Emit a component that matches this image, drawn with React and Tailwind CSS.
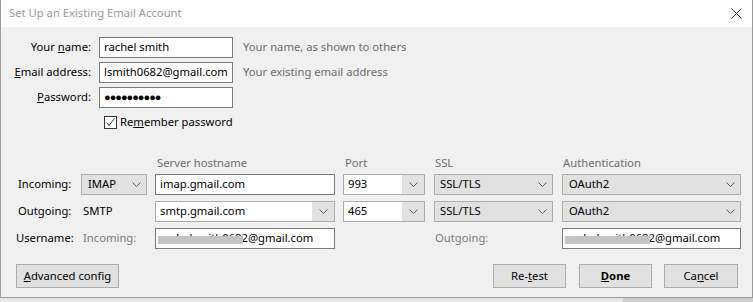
import React from 'react';

const Chevron = () => (
  <svg width="9" height="5" viewBox="0 0 9 5" className="block">
    <path d="M0.5 0.5 L4.5 4.5 L8.5 0.5" fill="none" stroke="#606060" strokeWidth="1" />
  </svg>
);

const Select = ({ value, width, pl = 'pl-[5px]' }) => (
  <div className={`h-[21px] ${width} bg-[#e1e1e1] border border-[#adadad] flex items-center justify-between ${pl} pr-[5px]`}>
    <span>{value}</span>
    <Chevron />
  </div>
);

const Combo = ({ value, width }) => (
  <div className={`h-[21px] ${width} bg-white border border-[#adadad] flex items-stretch`}>
    <span className="flex-1 flex items-center pl-[4px]">{value}</span>
    <span className="w-[22px] bg-[#e1e1e1] flex items-center justify-center">
      <Chevron />
    </span>
  </div>
);

const Input = ({ value, width, children }) => (
  <div className={`relative h-[21px] ${width} bg-white border border-[#7a7a7a] flex items-center pl-[4px] whitespace-nowrap overflow-hidden`}>
    {value}
    {children}
  </div>
);

const Blurred = ({ width }) => (
  <Input value="rachelsmith0682@gmail.com" width={width}>
    <span className="absolute left-[2px] top-[7px] w-[85px] h-[8px] bg-[#c3c3c3]" />
  </Input>
);

const Button = ({ children, width, bold }) => (
  <div className={`h-[24px] ${width} bg-[#e1e1e1] border border-[#adadad] flex items-center justify-center ${bold ? 'font-bold' : ''}`}>
    {children}
  </div>
);

const App = () => {
  return (
    <div className="w-[753px] h-[302px] bg-[#d2d2d2] text-[11.25px] text-black overflow-hidden" style={{ fontFamily: '"Noto Sans", "Open Sans", sans-serif' }}>
      <div className="w-[753px] h-[298px] bg-[#f0f0f0] border-l border-r border-b border-[#9a9a9a] flex flex-col">
        {/* title bar */}
        <div className="h-[27px] bg-white flex items-center justify-between pl-[8px] pr-[10px] shrink-0">
          <span className="text-[#999999]">Set Up an Existing Email Account</span>
          <svg width="11" height="11" viewBox="0 0 11 11">
            <path d="M0.5 0.5 L10.5 10.5 M10.5 0.5 L0.5 10.5" stroke="#404040" strokeWidth="1" fill="none" />
          </svg>
        </div>

        {/* account rows */}
        <div className="flex flex-col gap-[4px] mt-[10px]">
          <div className="flex items-center h-[21px]">
            <span className="w-[90px] text-right">Your <u>n</u>ame:</span>
            <div className="ml-[8px]"><Input value="rachel smith" width="w-[134px]" /></div>
            <span className="ml-[10px] text-[#6d6d6d]">Your name, as shown to others</span>
          </div>
          <div className="flex items-center h-[21px]">
            <span className="w-[90px] text-right"><u>E</u>mail address:</span>
            <div className="ml-[8px]"><Input value="lsmith0682@gmail.com" width="w-[134px]" /></div>
            <span className="ml-[10px] text-[#6d6d6d]">Your existing email address</span>
          </div>
          <div className="flex items-center h-[21px]">
            <span className="w-[90px] text-right"><u>P</u>assword:</span>
            <div className="ml-[8px]">
              <Input value={<span className="tracking-[-1px] text-[11px]">●●●●●●●●●●</span>} width="w-[134px]" />
            </div>
          </div>
        </div>
        <div className="flex items-center h-[16px] mt-[6px] pl-[103px]">
          <span className="w-[13px] h-[13px] bg-white border border-[#333333] flex items-center justify-center">
            <svg width="11" height="11" viewBox="0 0 11 11">
              <path d="M1.5 5.5 L4 8.5 L9.5 1.5" stroke="#333333" strokeWidth="1" fill="none" />
            </svg>
          </span>
          <span className="ml-[3px]">Re<u>m</u>ember password</span>
        </div>

        {/* server settings */}
        <div className="flex h-[16px] mt-[25px] items-center text-[#6d6d6d]">
          <span className="ml-[156px] w-[188px]">Server hostname</span>
          <span className="w-[90px]">Port</span>
          <span className="w-[128px]">SSL</span>
          <span>Authentication</span>
        </div>
        <div className="flex flex-col gap-[6px] mt-[3px]">
          <div className="flex items-center h-[21px] pl-[15px]">
            <span className="w-[65px] pl-[2px]">Incoming:</span>
            <Select value="IMAP" width="w-[66px]" pl="pl-[6px]" />
            <div className="ml-[8px]"><Input value="imap.gmail.com" width="w-[180px]" /></div>
            <div className="ml-[8px]"><Combo value="993" width="w-[82px]" /></div>
            <div className="ml-[9px]"><Select value="SSL/TLS" width="w-[119px]" /></div>
            <div className="ml-[9px]"><Select value="OAuth2" width="w-[179px]" pl="pl-[6px]" /></div>
          </div>
          <div className="flex items-center h-[21px] pl-[15px]">
            <span className="w-[67px] pl-[2px]">Outgoing:</span>
            <span className="w-[64px]">SMTP</span>
            <div className="ml-[8px]"><Combo value="smtp.gmail.com" width="w-[180px]" /></div>
            <div className="ml-[8px]"><Combo value="465" width="w-[82px]" /></div>
            <div className="ml-[9px]"><Select value="SSL/TLS" width="w-[119px]" /></div>
            <div className="ml-[9px]"><Select value="OAuth2" width="w-[179px]" pl="pl-[6px]" /></div>
          </div>
          <div className="flex items-center h-[21px] pl-[15px]">
            <span className="w-[67px]">Username:</span>
            <span className="w-[72px] text-[#7a7a7a]">Incoming:</span>
            <Blurred width="w-[180px]" />
            <span className="ml-[100px] w-[127px] text-[#7a7a7a]">Outgoing:</span>
            <Blurred width="w-[179px]" />
          </div>
        </div>

        {/* buttons */}
        <div className="flex items-center mt-[15px] pl-[15px]">
          <Button width="w-[103px]"><span><u>A</u>dvanced config</span></Button>
          <div className="flex-1" />
          <Button width="w-[73px]"><span>Re-<u>t</u>est</span></Button>
          <div className="ml-[13px]"><Button width="w-[73px]" bold><span><u>D</u>one</span></Button></div>
          <div className="ml-[12px] mr-[14px]"><Button width="w-[74px]"><span>Ca<u>n</u>cel</span></Button></div>
        </div>
      </div>
      <div className="flex h-[4px]">
        <div className="w-[623px] bg-[#e6e6e6]" />
        <div className="flex-1 bg-[#cdcdcd]" />
      </div>
    </div>
  );
};

export default App;
